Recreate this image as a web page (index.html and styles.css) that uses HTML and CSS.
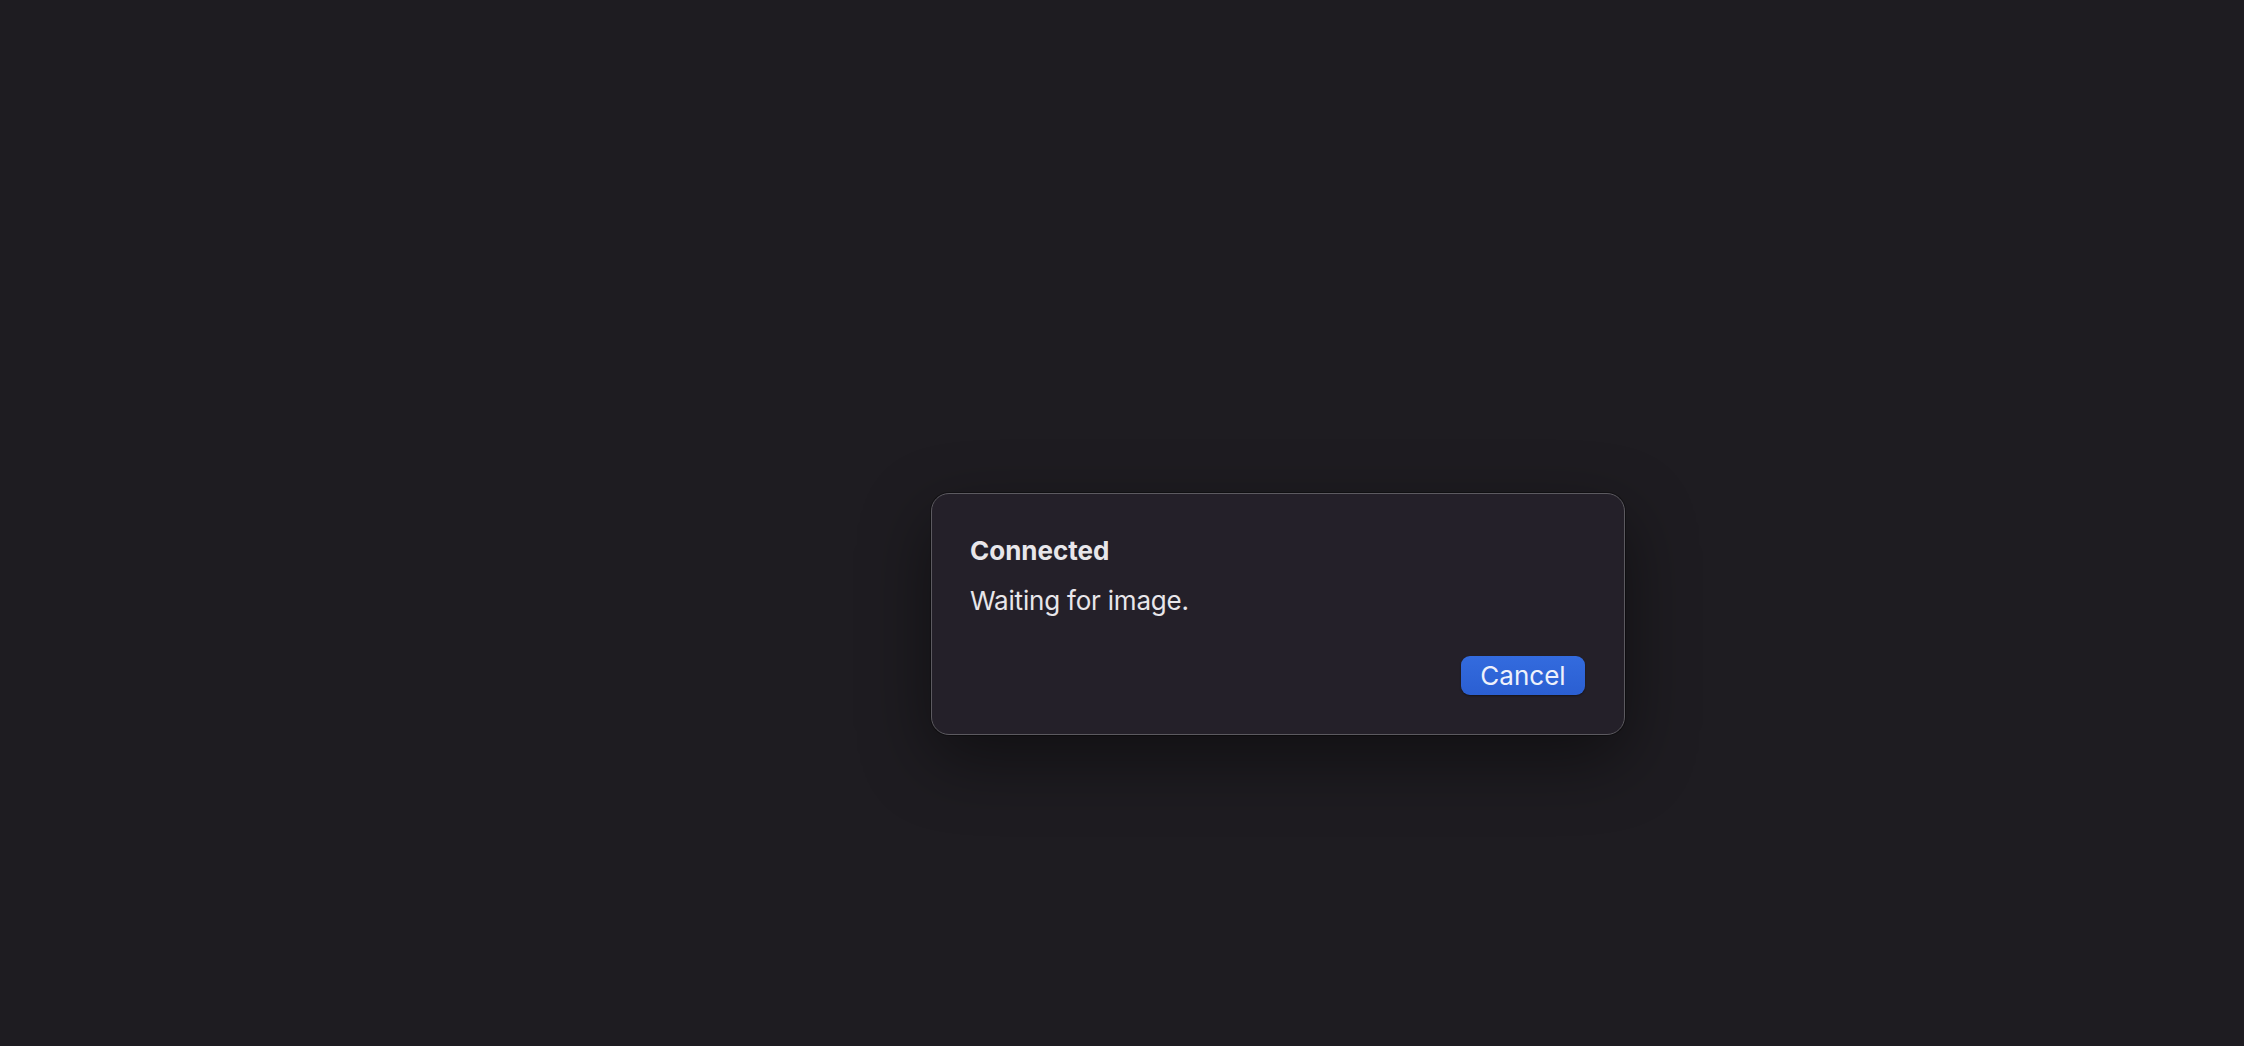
FILE: index.html
```html
<!DOCTYPE html>
<html lang="en">
<head>
    <meta charset="UTF-8">
    <meta name="viewport" content="width=device-width, initial-scale=1.0">
    <title>Connected</title>
    <link rel="stylesheet" href="styles.css">
</head>
<body>
    <div class="screen">
        <div class="dialog">
            <div class="title">Connected</div>
            <div class="message">Waiting for image.</div>
            <div class="actions">
                <button class="btn-primary">Cancel</button>
            </div>
        </div>
    </div>
</body>
</html>
```

FILE: styles.css
```css
html, body {
    margin: 0;
    height: 100%;
}

body {
    background: #1e1c21;
    font-family: Inter, "Noto Sans", sans-serif;
    color: #e8e6ea;
}

.screen {
    display: flex;
    align-items: flex-start;
    padding: 493px 0 0 931px;
}

.dialog {
    width: 694px;
    box-sizing: border-box;
    background: #242029;
    border: 1px solid #5c5a60;
    border-radius: 18px;
    padding: 41px 39px 39px 38px;
    box-shadow: 0 24px 70px rgba(0, 0, 0, 0.45), 0 0 0 1px rgba(0, 0, 0, 0.35);
}

.title {
    font-size: 26px;
    line-height: 32px;
    font-weight: 700;
}

.message {
    margin-top: 18px;
    font-size: 26px;
    line-height: 32px;
    letter-spacing: -0.2px;
}

.actions {
    display: flex;
    justify-content: flex-end;
    margin-top: 39px;
}

.btn-primary {
    width: 124px;
    height: 39px;
    padding: 0;
    border: none;
    border-radius: 9px;
    background: linear-gradient(#336bde, #2b5fd2);
    box-shadow: 0 1px 2px rgba(0, 0, 0, 0.4);
    color: #eef1fb;
    font-family: Inter, "Noto Sans", sans-serif;
    font-size: 26px;
    line-height: 39px;
}
```
